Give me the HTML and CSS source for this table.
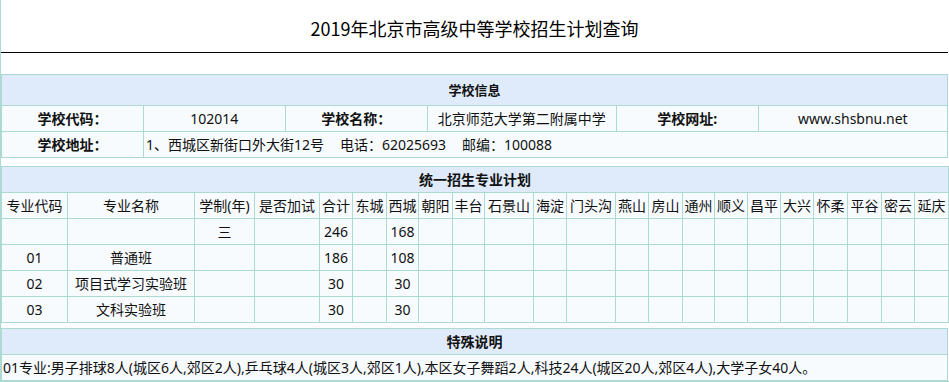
FILE: index.html
```html
<!DOCTYPE html>
<html lang="zh-CN">
<head>
<meta charset="utf-8">
<title>2019年北京市高级中等学校招生计划查询</title>
<link rel="stylesheet" href="styles.css">
</head>
<body>
<div class="page">
  <div class="title">2019年北京市高级中等学校招生计划查询</div>

  <table class="grid info">
    <colgroup>
      <col class="c15"><col class="c15"><col class="c15"><col class="c20"><col class="c15"><col class="c20">
    </colgroup>
    <tr class="head-row"><th colspan="6" class="head small">学校信息</th></tr>
    <tr>
      <td class="label">学校代码：</td>
      <td>102014</td>
      <td class="label">学校名称：</td>
      <td>北京师范大学第二附属中学</td>
      <td class="label">学校网址:</td>
      <td>www.shsbnu.net</td>
    </tr>
    <tr>
      <td class="label">学校地址：</td>
      <td colspan="5" class="left">1、西城区新街口外大街12号<span class="gap">电话：62025693</span><span class="gap">邮编：100088</span></td>
    </tr>
  </table>

  <table class="grid plan">
    <colgroup>
      <col style="width:66px"><col style="width:127px"><col style="width:60px"><col style="width:65px">
      <col style="width:33px"><col style="width:34px"><col style="width:32px"><col style="width:34px">
      <col style="width:32px"><col style="width:49px"><col style="width:33px"><col style="width:49px">
      <col style="width:33px"><col style="width:34px"><col style="width:32px"><col style="width:33px">
      <col style="width:33px"><col style="width:33px"><col style="width:34px"><col style="width:34px">
      <col style="width:33px"><col style="width:34px">
    </colgroup>
    <tr class="head-row"><th colspan="22" class="head">统一招生专业计划</th></tr>
    <tr>
      <td>专业代码</td><td>专业名称</td><td>学制(年)</td><td>是否加试</td>
      <td>合计</td><td>东城</td><td>西城</td><td>朝阳</td><td>丰台</td><td>石景山</td><td>海淀</td>
      <td>门头沟</td><td>燕山</td><td>房山</td><td>通州</td><td>顺义</td><td>昌平</td><td>大兴</td>
      <td>怀柔</td><td>平谷</td><td>密云</td><td>延庆</td>
    </tr>
    <tr>
      <td></td><td></td><td>三</td><td></td>
      <td>246</td><td></td><td>168</td><td></td><td></td><td></td><td></td>
      <td></td><td></td><td></td><td></td><td></td><td></td><td></td>
      <td></td><td></td><td></td><td></td>
    </tr>
    <tr>
      <td>01</td><td>普通班</td><td></td><td></td>
      <td>186</td><td></td><td>108</td><td></td><td></td><td></td><td></td>
      <td></td><td></td><td></td><td></td><td></td><td></td><td></td>
      <td></td><td></td><td></td><td></td>
    </tr>
    <tr>
      <td>02</td><td>项目式学习实验班</td><td></td><td></td>
      <td>30</td><td></td><td>30</td><td></td><td></td><td></td><td></td>
      <td></td><td></td><td></td><td></td><td></td><td></td><td></td>
      <td></td><td></td><td></td><td></td>
    </tr>
    <tr>
      <td>03</td><td>文科实验班</td><td></td><td></td>
      <td>30</td><td></td><td>30</td><td></td><td></td><td></td><td></td>
      <td></td><td></td><td></td><td></td><td></td><td></td><td></td>
      <td></td><td></td><td></td><td></td>
    </tr>
  </table>

  <table class="grid note">
    <tr class="head-row"><th class="head">特殊说明</th></tr>
    <tr><td class="left">01专业:男子排球8人(城区6人,郊区2人),乒乓球4人(城区3人,郊区1人),本区女子舞蹈2人,科技24人(城区20人,郊区4人),大学子女40人。</td></tr>
  </table>
</div>
</body>
</html>
```

FILE: styles.css
```css
html, body {
  margin: 0;
  padding: 0;
  background: #fff;
}

body {
  font-family: "Noto Sans", "Noto Sans CJK SC", sans-serif;
  font-size: 14px;
  color: #111;
}

.page {
  width: 948px;
  height: 381px;
  border-left: 1px solid #acd9d1;
  border-bottom: 1px solid #acd9d1;
}

.title {
  height: 52px;
  border-bottom: 1px solid #000;
  font-family: "Noto Sans CJK SC", sans-serif;
  font-size: 18px;
  line-height: 56px;
  text-align: center;
  color: #000;
  margin-right: 1px;
}

.grid {
  width: 947px;
  border-collapse: collapse;
  table-layout: fixed;
  background: #f7fbfe;
}

.grid td,
.grid th {
  border: 1px solid #acd9d1;
  padding: 0 1px;
  height: 25px;
  line-height: 20px;
  text-align: center;
  white-space: nowrap;
  overflow: hidden;
}

.grid .head {
  background: #dfebfa;
  font-weight: bold;
}

.grid .small {
  font-size: 13px;
}

.info {
  margin-top: 21px;
}

.info .head-row th {
  height: 30px;
}

.c15 { width: 15%; }
.c20 { width: 20%; }

.label {
  font-weight: bold;
}

.left {
  text-align: left !important;
}

.info .left {
  padding-left: 2px;
}

.gap {
  margin-left: 16px;
}

.plan {
  margin-top: 8px;
}

.note {
  margin-top: 5px;
}
```
